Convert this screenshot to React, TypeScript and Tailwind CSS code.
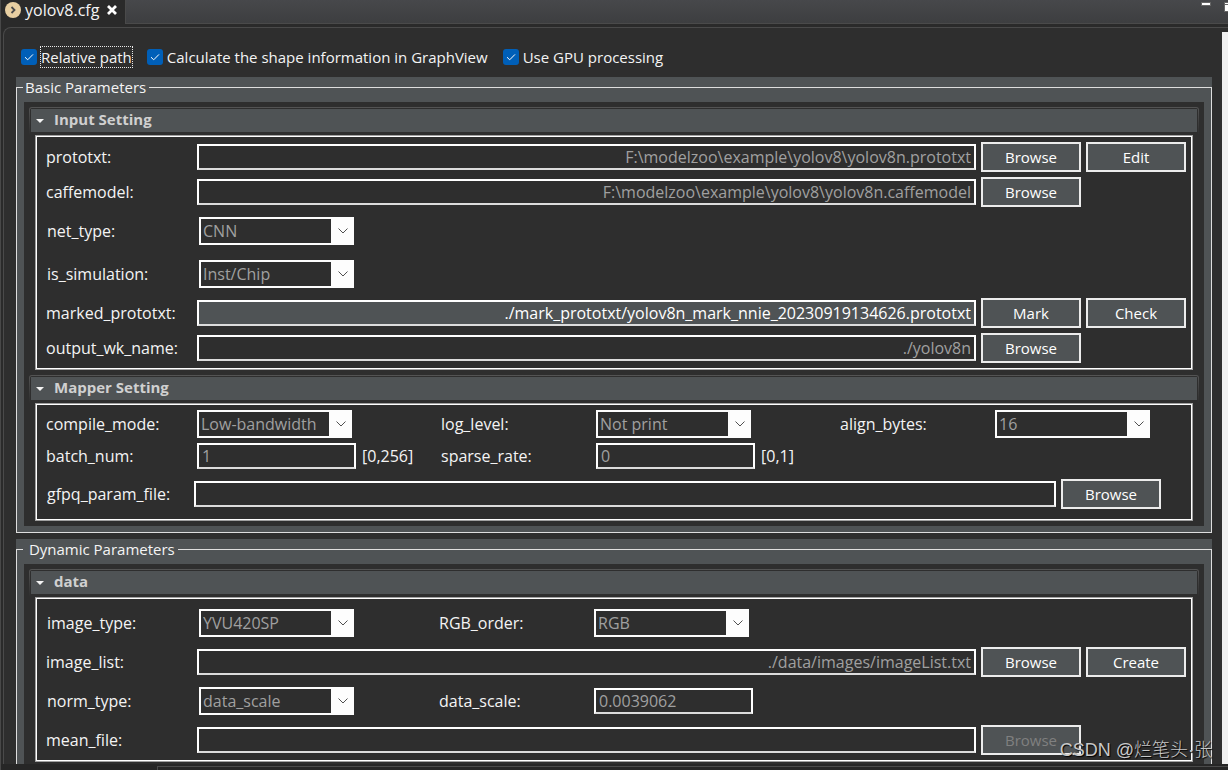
import type { ReactNode } from "react";

const textBox =
  "h-[26px] min-w-0 border-2 border-white border-b-[#dcdcdc] px-[3px] outline-none";

function TextField({
  id,
  value,
  className = "",
}: {
  id: string;
  value: string;
  className?: string;
}) {
  return (
    <input
      id={id}
      type="text"
      defaultValue={value}
      className={`${textBox} ${className}`}
    />
  );
}

function Dropdown({ id, value }: { id: string; value: string }) {
  return (
    <div className="relative h-7 w-[155px]">
      <select
        id={id}
        defaultValue={value}
        className="block h-7 w-full appearance-none border-2 border-r-[23px] border-[#fdfdfd] bg-[#2e2e2e] pl-[2px] text-[#a0a0a0] outline-none"
      >
        <option>{value}</option>
      </select>
      <svg
        viewBox="0 0 10 6"
        className="pointer-events-none absolute top-[11px] right-[6px] h-[6px] w-[10px]"
        fill="none"
        stroke="#505050"
      >
        <path d="M0.5 0.5 L5 5 L9.5 0.5" />
      </svg>
    </div>
  );
}

function PushButton({
  children,
  disabled = false,
}: {
  children: ReactNode;
  disabled?: boolean;
}) {
  return (
    <button
      type="button"
      disabled={disabled}
      className="h-[30px] w-[100px] shrink-0 border-2 border-[#ececec] bg-[#4f5355] text-[15px] text-white disabled:text-[#808080]"
    >
      {children}
    </button>
  );
}

function FileRow({
  id,
  value = "",
  active = false,
  children,
}: {
  id: string;
  value?: string;
  active?: boolean;
  children: ReactNode;
}) {
  return (
    <div className="flex items-center">
      <label htmlFor={id} className="w-[151px] shrink-0">
        {id}:
      </label>
      <TextField
        id={id}
        value={value}
        className={
          active
            ? "flex-1 bg-[#4f5355] text-right text-white"
            : "flex-1 bg-[#2e2e2e] text-right text-[#a0a0a0]"
        }
      />
      <div className="ml-[5px] flex w-[205px] shrink-0 gap-[5px]">
        {children}
      </div>
    </div>
  );
}

function Section({ title, children }: { title: string; children: ReactNode }) {
  return (
    <section>
      <div className="rounded-t-[3px] bg-linear-to-b from-[#545454] to-[#2e2e2e] px-px pt-px">
        <div className="rounded-t-[2px] bg-[#2e2e2e] px-px pt-px pb-[3px]">
          <h3 className="flex h-[23px] items-center bg-[#4f5355] pl-[5px] text-[15px] font-bold text-[#d0d0d0]">
            <svg viewBox="0 0 8 4" className="mr-[10px] h-1 w-2" fill="#f4f4f4">
              <path d="M0 0h8L4 4z" />
            </svg>
            <span className="pb-[3px]">{title}</span>
          </h3>
        </div>
      </div>
      <div className="mx-[6px] flex flex-col gap-[5px] border border-[#a0a0a0] py-[6px] pr-[6px] pl-[10px] shadow-[inset_0_0_0_1px_#fff]">
        {children}
      </div>
    </section>
  );
}

function Group({ title, children }: { title: string; children: ReactNode }) {
  return (
    <fieldset className="relative min-w-0 bg-[#4f5355] px-2 pt-[25px] pb-[7px]">
      <div className="pointer-events-none absolute inset-x-0 top-[10px] bottom-0 border border-[#dedede]" />
      <legend className="relative float-left -mt-[25px] -ml-px flex h-5 items-center bg-[#4f5355] pr-[3px] pl-[2px] text-[15px]">
        {title}
      </legend>
      <div className="clear-both flex flex-col gap-[5px] bg-[#2e2e2e] p-[5px]">
        {children}
      </div>
    </fieldset>
  );
}

function Option({ label, focused = false }: { label: string; focused?: boolean }) {
  return (
    <label className="flex items-center gap-1 text-[15px]">
      <span className="relative size-4">
        <input
          type="checkbox"
          defaultChecked
          className="block size-4 appearance-none rounded-[3px] bg-[#005fb8]"
        />
        <svg
          viewBox="0 0 16 16"
          className="pointer-events-none absolute inset-0"
          fill="none"
          stroke="#fff"
        >
          <path d="M4 8.2 L6.7 10.8 L12 5.4" />
        </svg>
      </span>
      <span
        className={
          focused ? "outline-1 outline-dotted outline-[#e8e8e8]" : undefined
        }
      >
        {label}
      </span>
    </label>
  );
}

export default function App() {
  return (
    <div className="relative flex h-screen flex-col overflow-hidden border-l border-[#484848] bg-[#2a2a2a] font-['Open_Sans','Noto_Sans_CJK_SC',sans-serif] text-[16px] leading-5 text-[#f4f4f4]">
      <header className="flex h-6 shrink-0 justify-between border-b border-[#4a4a4a] bg-linear-to-b from-[#47484b] to-[#3d3e40]">
        <div className="flex h-6 w-[125px] items-center gap-1 border-r border-[#4a4a4a] bg-[#2a2a2a] pb-1 pl-1">
          <svg viewBox="0 0 16 16" className="size-4" fill="none">
            <circle cx="8" cy="8" r="8" fill="#e8cfa2" />
            <path d="M6.5 5 L9.5 8 L6.5 11" stroke="#4a4a4a" strokeWidth="1.8" />
          </svg>
          <span>yolov8.cfg</span>
          <button type="button" aria-label="Close" className="ml-1">
            <svg viewBox="0 0 10 10" className="size-[10px]" stroke="#fff" strokeWidth="2.8">
              <path d="M1 1 L9 9 M9 1 L1 9" />
            </svg>
          </button>
        </div>
        <div className="flex">
          <svg viewBox="0 0 28 14" className="h-[14px] w-7" fill="#fff" stroke="#666">
            <rect x="1.5" y="2.5" width="9" height="3" />
            <rect x="24.5" y="2.5" width="9" height="9" />
            <path d="M24 4.5h4" />
          </svg>
        </div>
      </header>

      <div className="mt-[3px] ml-[2px] flex min-h-0 flex-1 rounded-tl-lg border-t border-l border-[#4a4a4a] bg-[#2e2e2e] pl-3">
        <main className="min-w-0 flex-1 overflow-hidden pt-[19px]">
          <div className="flex gap-[15px] pl-[5px]">
            <Option label="Relative path" focused />
            <Option label="Calculate the shape information in GraphView" />
            <Option label="Use GPU processing" />
          </div>

          <div className="mt-[10px] mr-[10px] flex flex-col gap-[6px]">
            <Group title="Basic Parameters">
              <Section title="Input Setting">
                <FileRow id="prototxt" value="F:\modelzoo\example\yolov8\yolov8n.prototxt">
                  <PushButton>Browse</PushButton>
                  <PushButton>Edit</PushButton>
                </FileRow>
                <FileRow id="caffemodel" value="F:\modelzoo\example\yolov8\yolov8n.caffemodel">
                  <PushButton>Browse</PushButton>
                </FileRow>
                <div className="flex h-[38px] items-center pl-px">
                  <label htmlFor="net_type" className="w-[152px]">
                    net_type:
                  </label>
                  <Dropdown id="net_type" value="CNN" />
                </div>
                <div className="flex h-[38px] items-center pl-px">
                  <label htmlFor="is_simulation" className="w-[152px]">
                    is_simulation:
                  </label>
                  <Dropdown id="is_simulation" value="Inst/Chip" />
                </div>
                <FileRow
                  id="marked_prototxt"
                  value="./mark_prototxt/yolov8n_mark_nnie_20230919134626.prototxt"
                  active
                >
                  <PushButton>Mark</PushButton>
                  <PushButton>Check</PushButton>
                </FileRow>
                <FileRow id="output_wk_name" value="./yolov8n">
                  <PushButton>Browse</PushButton>
                </FileRow>
              </Section>

              <Section title="Mapper Setting">
                <div className="grid grid-cols-[151px_244px_155px_244px_155px_1fr] items-center gap-y-[5px]">
                  <label htmlFor="compile_mode">compile_mode:</label>
                  <Dropdown id="compile_mode" value="Low-bandwidth" />
                  <label htmlFor="log_level">log_level:</label>
                  <Dropdown id="log_level" value="Not print" />
                  <label htmlFor="align_bytes">align_bytes:</label>
                  <Dropdown id="align_bytes" value="16" />
                  <label htmlFor="batch_num">batch_num:</label>
                  <div className="flex items-center gap-[6px]">
                    <TextField id="batch_num" value="1" className="w-[159px] bg-[#2e2e2e] text-[#a0a0a0]" />
                    <span>[0,256]</span>
                  </div>
                  <label htmlFor="sparse_rate">sparse_rate:</label>
                  <div className="flex items-center gap-[6px]">
                    <TextField id="sparse_rate" value="0" className="w-[159px] bg-[#2e2e2e] text-[#a0a0a0]" />
                    <span>[0,1]</span>
                  </div>
                </div>
                <div className="flex h-10 items-center gap-[5px] pr-[25px] pl-px">
                  <label htmlFor="gfpq_param_file" className="w-[142px] shrink-0">
                    gfpq_param_file:
                  </label>
                  <TextField id="gfpq_param_file" value="" className="flex-1 bg-[#2e2e2e]" />
                  <PushButton>Browse</PushButton>
                </div>
              </Section>
            </Group>

            <Group title={"\u00A0Dynamic Parameters"}>
              <Section title="data">
                <div className="grid h-[38px] grid-cols-[152px_240px_155px_1fr] items-center pl-px">
                  <label htmlFor="image_type">image_type:</label>
                  <Dropdown id="image_type" value="YVU420SP" />
                  <label htmlFor="RGB_order">RGB_order:</label>
                  <Dropdown id="RGB_order" value="RGB" />
                </div>
                <FileRow id="image_list" value="./data/images/imageList.txt">
                  <PushButton>Browse</PushButton>
                  <PushButton>Create</PushButton>
                </FileRow>
                <div className="grid h-[38px] grid-cols-[152px_240px_155px_1fr] items-center pl-px">
                  <label htmlFor="norm_type">norm_type:</label>
                  <Dropdown id="norm_type" value="data_scale" />
                  <label htmlFor="data_scale">data_scale:</label>
                  <TextField id="data_scale" value="0.0039062" className="w-[159px] bg-[#2e2e2e] text-[#a0a0a0]" />
                </div>
                <FileRow id="mean_file">
                  <PushButton disabled>Browse</PushButton>
                </FileRow>
              </Section>
            </Group>
          </div>
        </main>
        <div className="mt-1 w-[6px] shrink-0 bg-[#f0f0f0]" />
      </div>

      <footer className="h-[6px] shrink-0 bg-[#262626] pt-[2px] pl-[156px]">
        <div className="h-1 border-t border-l border-[#4a4a4a]" />
      </footer>

      <div className="absolute right-4 bottom-2 font-['Liberation_Sans','Noto_Sans_CJK_SC',sans-serif] text-[18px] leading-6 font-light text-[#c8c8c8] text-shadow-[1px_1px_1px_#000]">
        CSDN @烂笔头·张
      </div>
    </div>
  );
}
